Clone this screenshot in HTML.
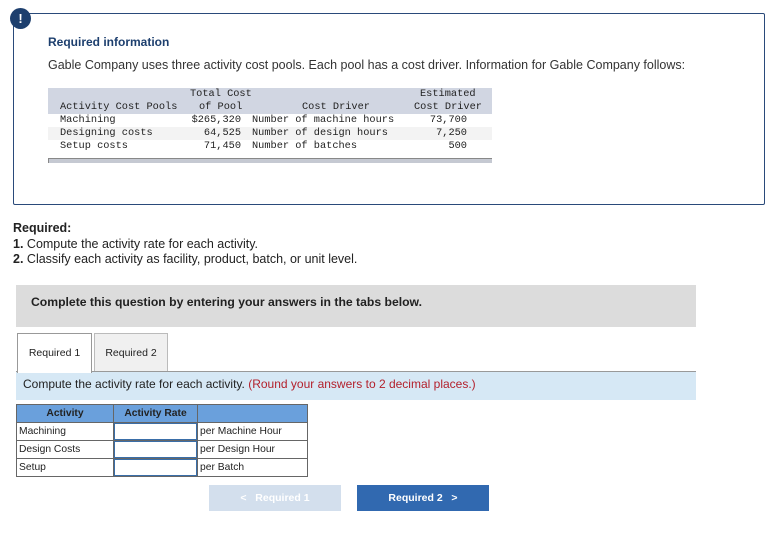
<!DOCTYPE html>
<html><head><style>
body{margin:0;width:781px;height:538px;background:#fff;font-family:"Liberation Sans",Arial,sans-serif;position:relative;overflow:hidden}
.a{position:absolute}
.mono{font-family:"Liberation Mono",monospace;font-size:10.3px;color:#222}
td{padding:0}
</style></head><body>
<div class="a" style="left:13px;top:13px;width:750px;height:190px;border:1px solid #2a4a7a;border-radius:2px"></div>
<div class="a" style="left:10px;top:8px;width:21px;height:21px;border-radius:50%;background:#1d3f6e;color:#fff;font-weight:bold;font-size:13px;text-align:center;line-height:21px">!</div>
<div class="a" style="left:48px;top:35px;font-size:12px;font-weight:bold;color:#1d3f6e">Required information</div>
<div class="a" style="left:48px;top:58px;font-size:12.5px;color:#333">Gable Company uses three activity cost pools. Each pool has a cost driver. Information for Gable Company follows:</div>
<div class="a" style="left:48px;top:88px;width:444px;height:26px;background:#d1d6e2"></div>
<div class="a" style="left:48px;top:127px;width:444px;height:13px;background:#f3f3f3"></div>
<div class="a" style="left:48px;top:158px;width:444px;height:5px;background:#c5c9d2;border-left:1px solid #888;border-top:1px solid #888;box-sizing:border-box"></div>
<div class="a mono" style="left:190px;top:88px">Total Cost</div>
<div class="a mono" style="left:420px;top:88px">Estimated</div>
<div class="a mono" style="left:60px;top:101px">Activity Cost Pools</div>
<div class="a mono" style="left:199px;top:101px">of Pool</div>
<div class="a mono" style="left:302px;top:101px">Cost Driver</div>
<div class="a mono" style="left:414px;top:101px">Cost Driver</div>
<div class="a mono" style="left:60px;top:114px;line-height:13px">Machining<br>Designing costs<br>Setup costs</div>
<div class="a mono" style="left:170px;top:114px;width:71px;text-align:right;line-height:13px">$265,320<br>64,525<br>71,450</div>
<div class="a mono" style="left:252px;top:114px;line-height:13px">Number of machine hours<br>Number of design hours<br>Number of batches</div>
<div class="a mono" style="left:410px;top:114px;width:57px;text-align:right;line-height:13px">73,700<br>7,250<br>500</div>
<div class="a" style="left:13px;top:221px;font-size:12.5px;color:#222;line-height:15.5px"><b>Required:</b><br><b>1.</b> Compute the activity rate for each activity.<br><b>2.</b> Classify each activity as facility, product, batch, or unit level.</div>
<div class="a" style="left:16px;top:285px;width:680px;height:42px;background:#dcdcdc"></div>
<div class="a" style="left:31px;top:295px;font-size:12.2px;font-weight:bold;color:#222">Complete this question by entering your answers in the tabs below.</div>
<div class="a" style="left:16px;top:371px;width:680px;height:28px;background:#d6e8f5;border-top:1px solid #999"></div>
<div class="a" style="left:17px;top:333px;width:73px;height:39px;background:#fff;border:1px solid #999;border-bottom:none;font-size:10.5px;color:#222;text-align:center;line-height:38px">Required 1</div>
<div class="a" style="left:94px;top:333px;width:72px;height:37px;background:#f0f0f0;border:1px solid #bbb;border-bottom:none;font-size:10.5px;color:#222;text-align:center;line-height:38px">Required 2</div>
<div class="a" style="left:23px;top:377px;font-size:12px;color:#222">Compute the activity rate for each activity. <span style="color:#b3202c">(Round your answers to 2 decimal places.)</span></div>
<table class="a" style="left:16px;top:404px;border-collapse:collapse;font-size:10.3px;color:#222">
<tr style="height:18px;background:#6aa0dc;font-weight:bold"><td style="width:96px;border:1px solid #666;text-align:center">Activity</td><td style="width:83px;border:1px solid #666;text-align:center">Activity Rate</td><td style="width:109px;border:1px solid #666"></td></tr>
<tr style="height:18px"><td style="border:1px solid #666;padding-left:2px">Machining</td><td style="border:1px solid #666;box-shadow:inset 0 0 0 1px #3a6ea8"></td><td style="border:1px solid #666;padding-left:2px">per Machine Hour</td></tr>
<tr style="height:18px"><td style="border:1px solid #666;padding-left:2px">Design Costs</td><td style="border:1px solid #666;box-shadow:inset 0 0 0 1px #3a6ea8"></td><td style="border:1px solid #666;padding-left:2px">per Design Hour</td></tr>
<tr style="height:18px"><td style="border:1px solid #666;padding-left:2px">Setup</td><td style="border:1px solid #666;box-shadow:inset 0 0 0 1px #3a6ea8"></td><td style="border:1px solid #666;padding-left:2px">per Batch</td></tr>
</table>
<div class="a" style="left:209px;top:485px;width:132px;height:26px;background:#d3dfed;color:#fff;font-size:10.5px;font-weight:bold;text-align:center;line-height:26px">&lt;&nbsp;&nbsp; Required 1</div>
<div class="a" style="left:357px;top:485px;width:132px;height:26px;background:#3169b0;color:#fff;font-size:10.5px;font-weight:bold;text-align:center;line-height:26px">Required 2 &nbsp;&nbsp;&gt;</div>
</body></html>
